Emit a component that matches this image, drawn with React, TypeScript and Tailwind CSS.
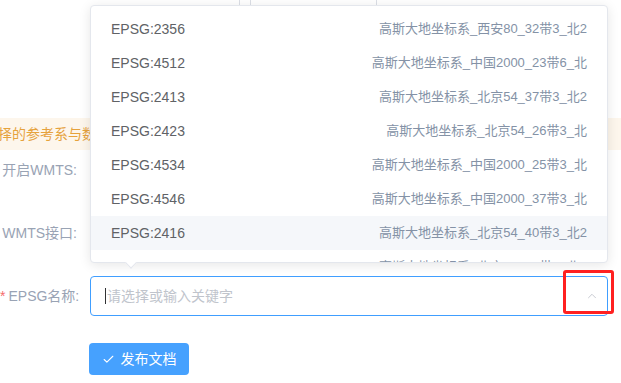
import { Check, ChevronUp } from "lucide-react";

const options = [
  { code: "EPSG:2356", name: "高斯大地坐标系_西安80_32带3_北2" },
  { code: "EPSG:4512", name: "高斯大地坐标系_中国2000_23带6_北" },
  { code: "EPSG:2413", name: "高斯大地坐标系_北京54_37带3_北2" },
  { code: "EPSG:2423", name: "高斯大地坐标系_北京54_26带3_北" },
  { code: "EPSG:4534", name: "高斯大地坐标系_中国2000_25带3_北" },
  { code: "EPSG:4546", name: "高斯大地坐标系_中国2000_37带3_北" },
  { code: "EPSG:2416", name: "高斯大地坐标系_北京54_40带3_北2" },
  { code: "EPSG:2414", name: "高斯大地坐标系_北京54_38带3_北2" },
];

const App = () => {
  const hovered = 6;
  return (
    <div
      className="relative h-[383px] w-[621px] overflow-hidden bg-white"
      style={{ fontFamily: '"Liberation Sans", "Noto Sans CJK SC", sans-serif' }}>
      {/* cut-off field at the very top */}
      <div className="flex h-[5px] overflow-hidden pl-[239px]">
        <div className="w-[11px] border-l border-[#dcdfe6]" />
        <div className="flex w-[127px] items-end border-x border-[#dcdfe6] pl-[14px]">
          <span className="-mb-[11px] text-[13px] leading-[13px] text-[#303133]">
            8e95e6a9950f1e3
          </span>
        </div>
      </div>

      {/* alert */}
      <div className="mt-[113px] flex h-[32px] items-center bg-[#fdf6ec] text-[14px] text-[#e6a23c]">
        <span className="-ml-[2px] whitespace-nowrap">择的参考系与数据源进行发布</span>
      </div>

      {/* form */}
      <div className="flex h-10 items-center">
        <label className="w-[90px] shrink-0 whitespace-nowrap pr-[13px] text-right text-[14px] text-[#99a3b4]">
          开启WMTS:
        </label>
      </div>
      <div className="mt-[23px] flex h-10 items-center">
        <label className="w-[90px] shrink-0 whitespace-nowrap pr-[13px] text-right text-[14px] text-[#99a3b4]">
          WMTS接口:
        </label>
      </div>
      <div className="mt-[23px] flex h-10 items-center">
        <label className="w-[90px] shrink-0 whitespace-nowrap pr-[13px] text-right text-[14px] text-[#99a3b4]">
          <span className="mr-[3px] text-[#f56c6c]">*</span>EPSG名称:
        </label>
        <div className="flex h-10 w-[518px] items-center rounded border border-[#409eff] pl-[14px] pr-[8px]">
          <span className="mr-px h-[16px] w-px bg-[#303133]" />
          <span className="flex-1 text-[14px] text-[#c0c4cc]">请选择或输入关键字</span>
          <ChevronUp size={14} strokeWidth={1.5} className="text-[#c0c4cc]" />
        </div>
      </div>
      <div className="mt-[27px] flex">
        <div className="w-[89px]" />
        <button className="flex h-8 w-[100px] items-center justify-center gap-[6px] rounded bg-[#46a1fe] text-[14px] text-white">
          <Check size={13} strokeWidth={2} />
          发布文档
        </button>
      </div>

      {/* dropdown */}
      <div className="absolute left-[90px] top-[5px] h-[258px] w-[518px] overflow-hidden rounded border border-[#e4e7ed] bg-white py-[6px] shadow-[0_2px_12px_0_rgba(0,0,0,0.1)]">
        {options.map((o, i) => (
          <div
            key={o.code}
            className={`flex h-[34px] items-center justify-between px-5 ${
              i === hovered ? "bg-[#f5f7fa]" : ""
            }`}>
            <span className="text-[14px] text-[#606266]">{o.code}</span>
            <span className="text-[13px] text-[#8492a6]">{o.name}</span>
          </div>
        ))}
      </div>
      <div className="absolute left-[127px] top-[259px] size-[8px] rotate-45 border-b border-r border-[#e4e7ed] bg-white" />

      {/* annotation */}
      <div className="absolute left-[563px] top-[270px] h-[44px] w-[51px] rounded-[3px] border-[3px] border-[#ff2020]" />
    </div>
  );
};

export default App;
